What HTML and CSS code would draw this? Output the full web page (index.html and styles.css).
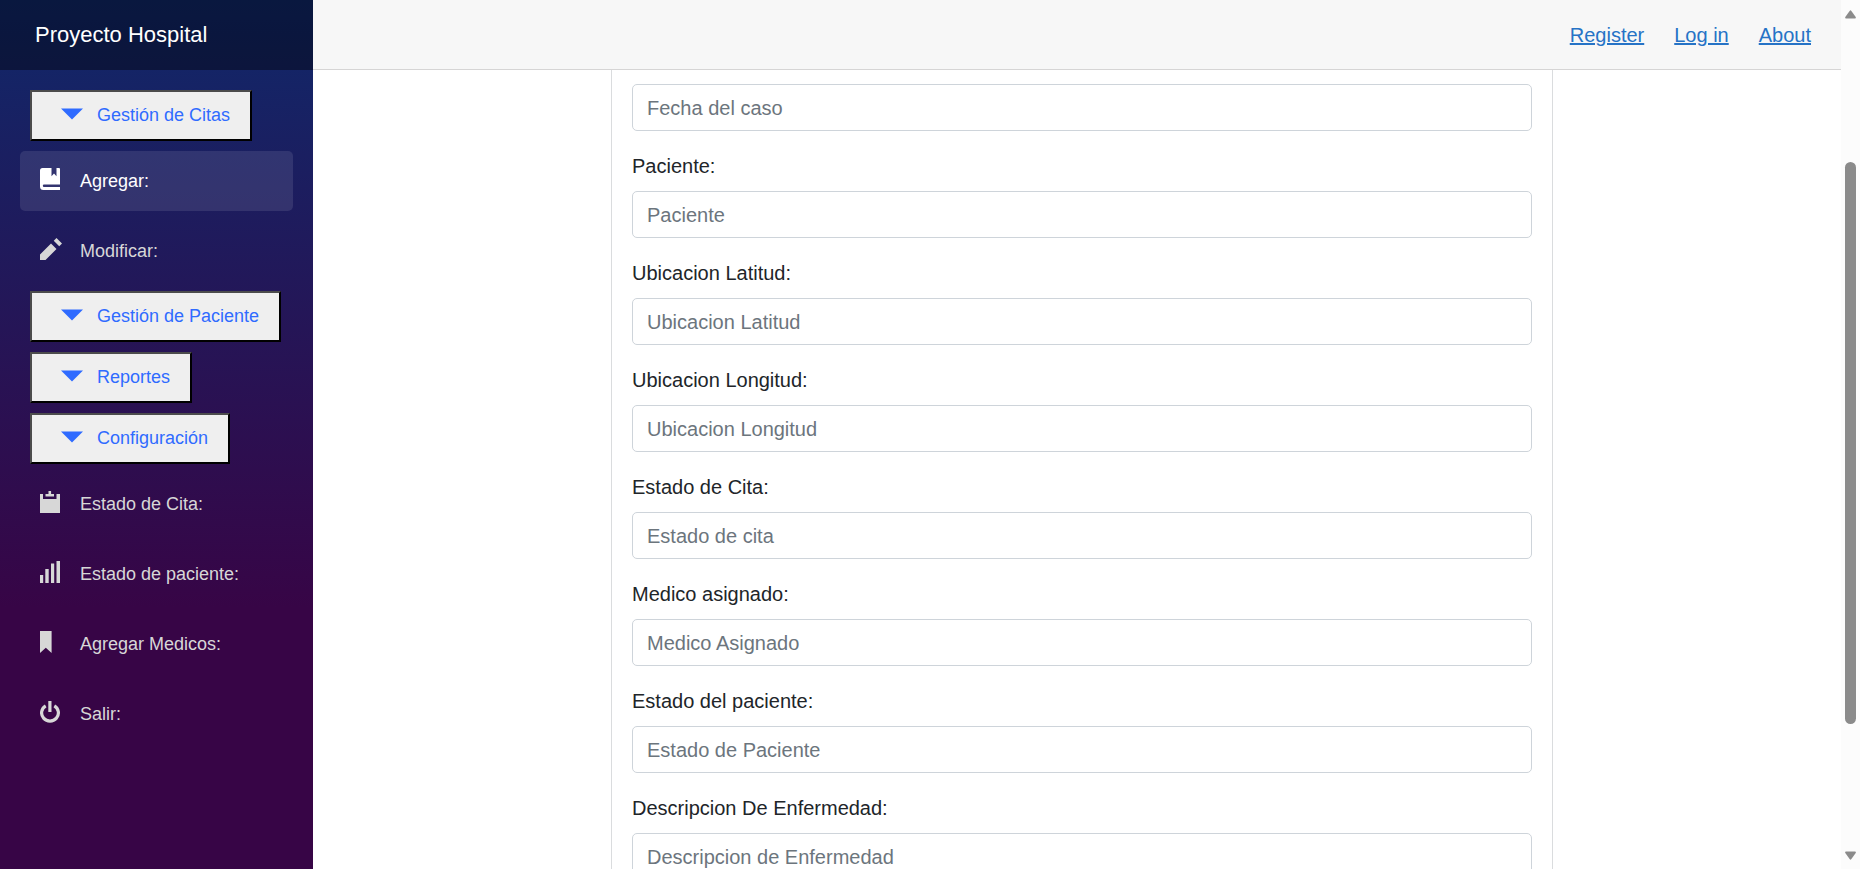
FILE: index.html
```html
<!DOCTYPE html>
<html lang="es">
<head>
<meta charset="utf-8">
<title>Proyecto Hospital</title>
<link rel="stylesheet" href="styles.css">
</head>
<body>
<div class="page">
  <aside class="sidebar">
    <div class="brand">Proyecto Hospital</div>
    <nav class="menu">
      <button class="group"><svg class="icon" viewBox="0 0 8 8"><path d="M0 2l4 4 4-4h-8z"/></svg>Gestión de Citas</button>
      <a class="item active"><svg class="icon" viewBox="0 0 22 22"><path fill-rule="evenodd" d="M2.500 0H11.500V8.200L14 5.500L16.500 8.200V0H19Q20 0 20 1V16.500H4Q2.800 16.500 2.800 17.700T4 19H20V22H3.500Q0 22 0 18.500V2.500Q0 0 2.500 0z"/></svg>Agregar:</a>
      <a class="item"><svg class="icon" viewBox="0 0 8 8"><path d="M6 0l-1 1 2 2 1-1-2-2zm-2 2l-4 4v2h2l4-4-2-2z"/></svg>Modificar:</a>
      <button class="group"><svg class="icon" viewBox="0 0 8 8"><path d="M0 2l4 4 4-4h-8z"/></svg>Gestión de Paciente</button>
      <button class="group"><svg class="icon" viewBox="0 0 8 8"><path d="M0 2l4 4 4-4h-8z"/></svg>Reportes</button>
      <button class="group"><svg class="icon" viewBox="0 0 8 8"><path d="M0 2l4 4 4-4h-8z"/></svg>Configuración</button>
      <a class="item"><svg class="icon" viewBox="0 0 22 22"><path d="M8.500 0h2.600v3h2.900v2.600H5.500V3h3zM0 3h3v5h13.500V3H20v19H0z"/></svg>Estado de Cita:</a>
      <a class="item"><svg class="icon" viewBox="0 0 22 22"><path d="M0 14h3.200v8H0zM5.300 8h3.400v14H5.300zM11 2.500h3.200V22H11zM16.500 0H20v22h-3.500z"/></svg>Estado de paciente:</a>
      <a class="item"><svg class="icon" viewBox="0 0 22 22"><path d="M0 0h11.600v22L5.800 16.700 0 22z"/></svg>Agregar Medicos:</a>
      <a class="item"><svg class="icon" viewBox="0 0 22 22"><path d="M8.300 0h3.200v11H8.300z"/><path d="M5.700 4.800A8.400 8.200 0 1 0 14.300 4.800" fill="none" stroke="currentColor" stroke-width="3.200"/></svg>Salir:</a>
    </nav>
  </aside>
  <main class="main">
    <header class="topbar"><a href="#">Register</a><a href="#">Log in</a><a href="#">About</a></header>
    <form class="card">
      <input class="control" placeholder="Fecha del caso">
      <label class="label">Paciente:</label>
      <input class="control" placeholder="Paciente">
      <label class="label">Ubicacion Latitud:</label>
      <input class="control" placeholder="Ubicacion Latitud">
      <label class="label">Ubicacion Longitud:</label>
      <input class="control" placeholder="Ubicacion Longitud">
      <label class="label">Estado de Cita:</label>
      <input class="control" placeholder="Estado de cita">
      <label class="label">Medico asignado:</label>
      <input class="control" placeholder="Medico Asignado">
      <label class="label">Estado del paciente:</label>
      <input class="control" placeholder="Estado de Paciente">
      <label class="label">Descripcion De Enfermedad:</label>
      <input class="control" placeholder="Descripcion de Enfermedad">
    </form>
  </main>
  <div class="scrollbar">
    <svg class="arrow" viewBox="0 0 11 9"><path d="M4.6.9Q5.5-.2 6.4.9L10.7 7Q11.3 8.6 10 8.6H1Q-.3 8.6.3 7z"/></svg>
    <div class="thumb"></div>
    <svg class="arrow arrow-down" viewBox="0 0 11 9"><path d="M4.6.9Q5.5-.2 6.4.9L10.7 7Q11.3 8.6 10 8.6H1Q-.3 8.6.3 7z"/></svg>
  </div>
</div>
</body>
</html>
```

FILE: styles.css
```css
* { box-sizing: border-box; }

body {
  margin: 0;
  overflow: hidden;
  font: 20px/30px "Liberation Sans", Arial, sans-serif;
  color: #212529;
  background: #fff;
}

.page { display: flex; height: 100vh; overflow: hidden; }

.sidebar {
  flex: 0 0 313px;
  background: linear-gradient(180deg, #10286a 0%, #370546 70%);
}

.brand {
  height: 70px;
  padding-left: 35px;
  line-height: 70px;
  font-size: 22px;
  color: #fff;
  background: rgba(0, 0, 0, 0.4);
}

.menu {
  display: flex;
  flex-direction: column;
  align-items: flex-start;
  gap: 10px;
  padding: 20px 20px 0;
}

.icon { flex: none; width: 22px; height: 22px; fill: currentColor; }

.group {
  display: flex;
  align-items: center;
  gap: 14px;
  height: 51px;
  margin: 0 0 0 10px;
  padding: 0 20px 2px 29px;
  border: 2px solid;
  border-color: #4c4c4c #000 #000 #4c4c4c;
  background: #efefef;
  color: #2f6bff;
  font: 18px/30px "Liberation Sans", Arial, sans-serif;
}

.group .icon { margin-top: -1px; }

.item {
  display: flex;
  align-items: center;
  gap: 18px;
  width: 273px;
  height: 60px;
  padding-left: 20px;
  border-radius: 5px;
  color: #d7d7d7;
  font-size: 18px;
}

.item .icon { margin-bottom: 4px; }

.item.active { background: rgba(255, 255, 255, 0.1); color: #fff; }

.main { flex: 1; min-width: 0; overflow: hidden; }

.topbar {
  display: flex;
  align-items: center;
  justify-content: flex-end;
  gap: 30px;
  height: 70px;
  padding-right: 30px;
  border-bottom: 1px solid #d6d5d5;
  background: #f7f7f7;
}

.topbar a { color: #2673c6; text-decoration: underline; text-decoration-thickness: 2px; }

.card {
  display: flex;
  flex-direction: column;
  width: 942px;
  height: 900px;
  margin-left: 298px;
  padding: 14px 20px 0;
  border: 1px solid #dadcde;
  border-width: 0 1px;
}

.control {
  flex: none;
  width: 100%;
  height: 47px;
  padding: 2px 14px 0;
  border: 1px solid #ced4da;
  border-radius: 5px;
  background: #fff;
  font: inherit;
}

.control::placeholder { color: #6c757d; opacity: 1; }

.label { flex: none; margin: 20px 0 10px; }

.scrollbar {
  display: flex;
  flex: 0 0 19px;
  flex-direction: column;
  align-items: flex-start;
  padding: 10px 4px 9px;
  background: #fcfcfc;
}

.arrow { width: 11px; height: 9px; fill: #8b8b8b; }
.arrow-down { margin-top: auto; transform: rotate(180deg); }

.thumb {
  width: 11px;
  height: 562px;
  margin-top: 143px;
  border-radius: 6px;
  background: #8b8b8b;
}
```
